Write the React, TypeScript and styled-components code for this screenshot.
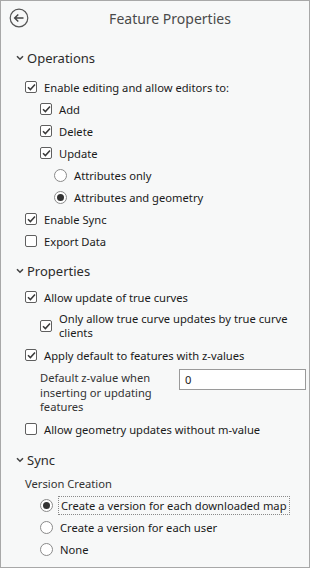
import React from "react";
import styled, { createGlobalStyle } from "styled-components";

const Global = createGlobalStyle`
  html, body { margin: 0; padding: 0; background: #f7f8f8; }
  * { box-sizing: border-box; }
`;

const Frame = styled.div`
  width: 310px;
  height: 568px;
  border: 1px solid #a8a8a8;
  background: #f7f8f8;
  font-family: "Noto Sans", "Open Sans", sans-serif;
  font-size: 11.2px;
  color: #1a1a1a;
  display: flex;
  flex-direction: column;
  overflow: hidden;
`;

const Header = styled.div`
  height: 34px;
  display: flex;
  align-items: center;
  padding-left: 8px;
`;

const BackButton = styled.button`
  width: 20px;
  height: 20px;
  padding: 0;
  border: none;
  background: none;
  display: flex;
  align-items: center;
  justify-content: center;
`;

const Title = styled.div`
  flex: 1;
  text-align: center;
  font-size: 14px;
  color: #4a4a4a;
  padding-left: 2px;
`;

const SectionHeader = styled.div<{ $mt: number }>`
  height: 22px;
  margin-top: ${(p) => p.$mt}px;
  display: flex;
  align-items: center;
  padding-left: 15px;
  font-size: 13px;
  color: #2b2b2b;
  gap: 3px;
  flex: none;
`;

const Row = styled.label<{ $indent: number; $mt?: number }>`
  height: 22px;
  margin-top: ${(p) => p.$mt ?? 0}px;
  display: flex;
  align-items: center;
  padding-left: ${(p) => p.$indent}px;
  gap: 7px;
  flex: none;
`;

const WrapRow = styled.label<{ $indent: number }>`
  display: flex;
  align-items: center;
  padding-left: ${(p) => p.$indent}px;
  gap: 7px;
  padding-top: 4px;
  padding-bottom: 4px;
  line-height: 14px;
  flex: none;
`;

const Box = styled.span`
  width: 12px;
  height: 12px;
  flex: none;
  border: 1px solid #5f5f5f;
  border-radius: 2px;
  background: #fff;
  display: flex;
  align-items: center;
  justify-content: center;
`;

const Radio = styled.span<{ $checked: boolean }>`
  width: 13px;
  height: 13px;
  flex: none;
  border: 1px solid #8a8a8a;
  border-radius: 50%;
  background: #fff;
  display: flex;
  align-items: center;
  justify-content: center;
  &::after {
    content: "";
    width: 7px;
    height: 7px;
    border-radius: 50%;
    background: ${(p) => (p.$checked ? "#333" : "transparent")};
  }
`;

const Focus = styled.span`
  outline: 1px dotted #8a8a8a;
  outline-offset: 1px;
  padding: 0 1px;
`;

const ZRow = styled.div`
  display: grid;
  grid-template-columns: 139px 127px;
  align-items: start;
  padding-left: 39px;
  padding-top: 3px;
  height: 52px;
  flex: none;
`;

const ZLabel = styled.div`
  line-height: 14.5px;
  padding-top: 2px;
  color: #333;
`;

const Input = styled.div`
  height: 21px;
  border: 1px solid #9a9a9a;
  background: #fff;
  padding-left: 5px;
  display: flex;
  align-items: center;
`;

const SubLabel = styled.div`
  height: 22px;
  margin-top: 1px;
  display: flex;
  align-items: center;
  padding-left: 24px;
  color: #333;
  flex: none;
`;

const Check = () => (
  <svg width="9" height="8" viewBox="0 0 9 8">
    <path d="M1 4.2 L3.4 6.6 L8 1.4" fill="none" stroke="#3a3a3a" strokeWidth="1.5" />
  </svg>
);

const CheckItem: React.FC<{ checked: boolean; indent: number; mt?: number; children: React.ReactNode }> = ({
  checked,
  indent,
  mt,
  children,
}) => (
  <Row $indent={indent} $mt={mt}>
    <Box>{checked && <Check />}</Box>
    <span>{children}</span>
  </Row>
);

const RadioItem: React.FC<{ checked: boolean; indent: number; children: React.ReactNode }> = ({
  checked,
  indent,
  children,
}) => (
  <Row $indent={indent}>
    <Radio $checked={checked} />
    <span>{children}</span>
  </Row>
);

const Chevron = () => (
  <svg width="8" height="6" viewBox="0 0 8 6">
    <path d="M1 1.2 L4 4.2 L7 1.2" fill="none" stroke="#444" strokeWidth="1.6" />
  </svg>
);

export default function App() {
  return (
    <>
      <Global />
      <Frame>
        <Header>
          <BackButton aria-label="Back">
            <svg width="20" height="20" viewBox="0 0 20 20">
              <circle cx="10" cy="10" r="8.8" fill="none" stroke="#555" strokeWidth="1.2" />
              <path d="M14.5 10 H5.8 M9.3 6.4 L5.6 10 L9.3 13.6" fill="none" stroke="#444" strokeWidth="1.4" />
            </svg>
          </BackButton>
          <Title>Feature Properties</Title>
        </Header>

        <SectionHeader $mt={12}>
          <Chevron />
          Operations
        </SectionHeader>
        <CheckItem checked indent={24} mt={7}>Enable editing and allow editors to:</CheckItem>
        <CheckItem checked indent={39}>Add</CheckItem>
        <CheckItem checked indent={39}>Delete</CheckItem>
        <CheckItem checked indent={39}>Update</CheckItem>
        <RadioItem checked={false} indent={53}>Attributes only</RadioItem>
        <RadioItem checked indent={53}>Attributes and geometry</RadioItem>
        <CheckItem checked indent={24}>Enable Sync</CheckItem>
        <CheckItem checked={false} indent={24}>Export Data</CheckItem>

        <SectionHeader $mt={8}>
          <Chevron />
          Properties
        </SectionHeader>
        <CheckItem checked indent={24} mt={4}>Allow update of true curves</CheckItem>
        <WrapRow $indent={39}>
          <Box>
            <Check />
          </Box>
          <span>Only allow true curve updates by true curve clients</span>
        </WrapRow>
        <CheckItem checked indent={24}>Apply default to features with z-values</CheckItem>
        <ZRow>
          <ZLabel>Default z-value when inserting or updating features</ZLabel>
          <Input>0</Input>
        </ZRow>
        <CheckItem checked={false} indent={24}>Allow geometry updates without m-value</CheckItem>

        <SectionHeader $mt={9}>
          <Chevron />
          Sync
        </SectionHeader>
        <SubLabel>Version Creation</SubLabel>
        <RadioItem checked indent={39}>
          <Focus>Create a version for each downloaded map</Focus>
        </RadioItem>
        <RadioItem checked={false} indent={39}>Create a version for each user</RadioItem>
        <RadioItem checked={false} indent={39}>None</RadioItem>
      </Frame>
    </>
  );
}
